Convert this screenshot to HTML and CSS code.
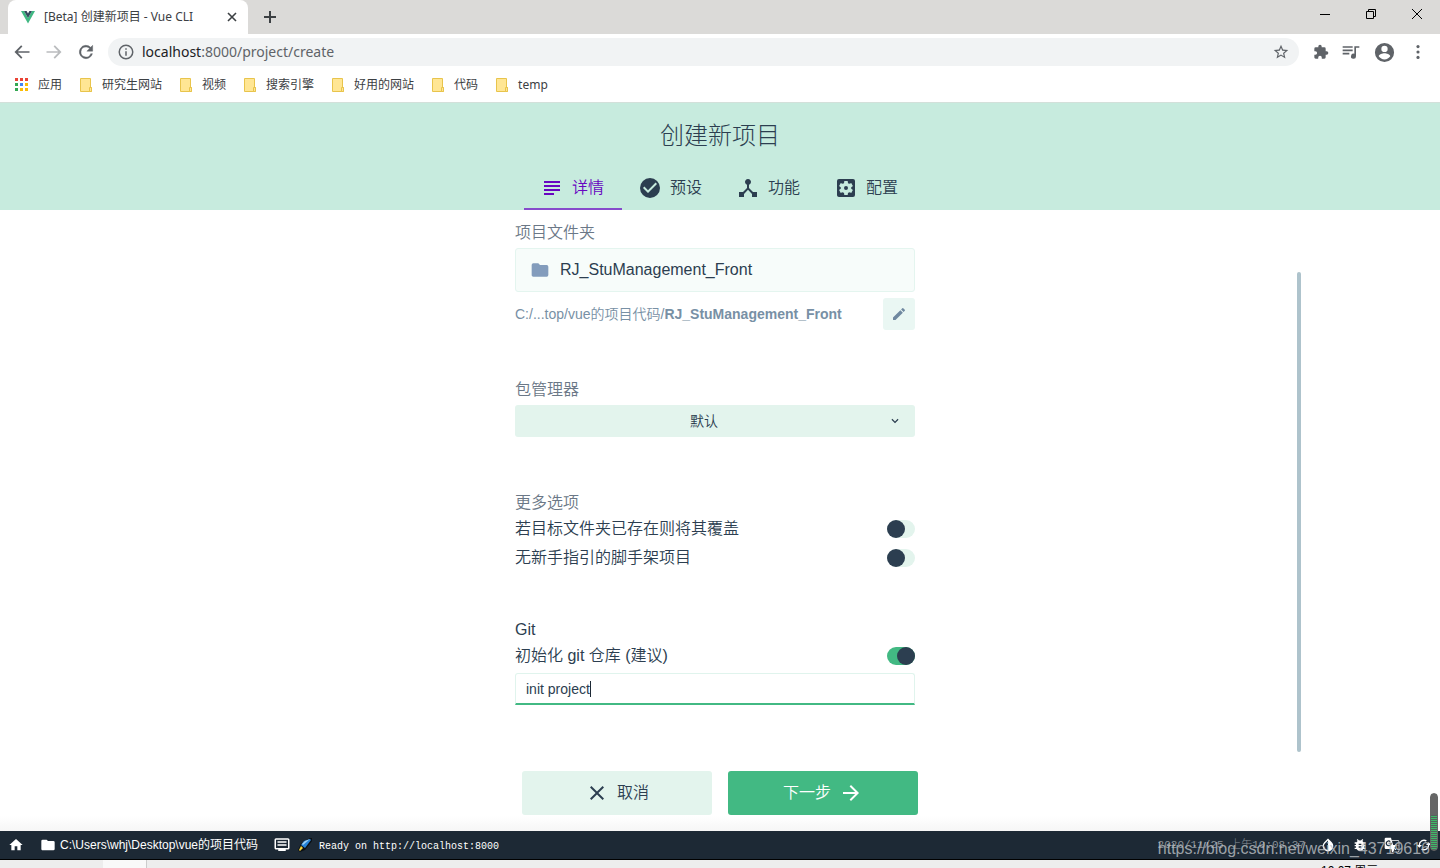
FILE: index.html
```html
<!DOCTYPE html>
<html lang="zh-CN">
<head>
<meta charset="utf-8">
<title>[Beta] 创建新项目 - Vue CLI</title>
<link rel="stylesheet" href="styles.css">
</head>
<body>
<div class="browser">
  <div class="tabstrip">
    <div class="browser-tab">
      <svg class="i16" viewBox="0 0 16 16"><path fill="#41b883" d="M1 2h3l4 7 4-7h3L8 14.500z"/><path fill="#35495e" d="M4 2h2.600L8 4.500 9.400 2H12L8 9z"/></svg>
      <span class="tab-title">[Beta] 创建新项目 - Vue CLI</span>
      <button class="plain" aria-label="关闭标签页"><svg class="i16" viewBox="0 0 16 16"><path stroke="#3c4043" stroke-width="1.600" d="M4 4l8 8M12 4l-8 8"/></svg></button>
    </div>
    <button class="plain new-tab" aria-label="新标签页"><svg class="i16" viewBox="0 0 16 16"><path stroke="#3c4043" stroke-width="2" d="M2 8h12M8 2v12"/></svg></button>
    <div class="window-buttons">
      <button class="plain" aria-label="最小化"><svg class="i16" viewBox="0 0 16 16"><path stroke="#000" d="M3 8.500h10"/></svg></button>
      <button class="plain" aria-label="还原"><svg class="i16" viewBox="0 0 16 16"><path fill="none" stroke="#000" d="M3.500 5.500h7v7h-7zM5.500 5.500v-2h7v7h-2"/></svg></button>
      <button class="plain" aria-label="关闭"><svg class="i16" viewBox="0 0 16 16"><path stroke="#000" d="M3 3l10 10M13 3L3 13"/></svg></button>
    </div>
  </div>
  <div class="toolbar">
    <button class="plain" aria-label="后退"><svg class="i20" viewBox="0 0 24 24"><path fill="#5f6368" d="M21 11H7l5.500-5.500L11 4l-8 8 8 8 1.500-1.500L7 13h14z"/></svg></button>
    <button class="plain" aria-label="前进"><svg class="i20" viewBox="0 0 24 24"><path fill="#babcbe" d="M13 4l-1.500 1.500L17 11H3v2h14l-5.500 5.500L13 20l8-8z"/></svg></button>
    <button class="plain" aria-label="刷新"><svg class="i20" viewBox="0 0 24 24"><path fill="#5f6368" stroke="#5f6368" stroke-width=".5" d="M17.650 6.350A8 8 0 1 0 19.730 14h-2.080A6 6 0 1 1 12 6c1.660 0 3.140.69 4.220 1.780L13 11h7V4z"/></svg></button>
    <div class="address">
      <svg class="i18" viewBox="0 0 24 24"><path fill="#5f6368" d="M11 7h2v2h-2zm0 4h2v6h-2zm1-9a10 10 0 1 0 0 20 10 10 0 0 0 0-20zm0 18a8 8 0 1 1 0-16 8 8 0 0 1 0 16z"/></svg>
      <span class="url"><span class="host">localhost</span>:8000/project/create</span>
      <button class="plain" aria-label="收藏"><svg class="i16" viewBox="1 1 22 22"><path fill="#5f6368" d="M22 9.240l-7.190-.62L12 2 9.190 8.630 2 9.240l5.460 4.730L5.820 21 12 17.270 18.180 21l-1.630-7.030zM12 15.400l-3.760 2.270 1-4.280-3.320-2.880 4.380-.38L12 6.100l1.710 4.040 4.380.38-3.320 2.880 1 4.280z"/></svg></button>
    </div>
    <div class="extensions">
      <button class="plain" aria-label="扩展程序"><svg class="i16" viewBox="0 0 24 24"><path fill="#5f6368" d="M20.500 11H19V7a2 2 0 0 0-2-2h-4V3.500a2.500 2.500 0 0 0-5 0V5H4a2 2 0 0 0-2 2v3.800h1.500a2.700 2.700 0 0 1 0 5.400H2V20c0 1.100.900 2 2 2h3.800v-1.500a2.700 2.700 0 0 1 5.400 0V22H17a2 2 0 0 0 2-2v-4h1.500a2.500 2.500 0 0 0 0-5z"/></svg></button>
      <button class="plain" aria-label="媒体控件"><svg class="i20" viewBox="0 0 24 24"><path fill="#5f6368" d="M2 5h12v2H2zm0 4h12v2H2zm0 4h8v2H2zM16 5h6v2h-4v10a3 3 0 1 1-2-2.800z"/></svg></button>
      <button class="plain" aria-label="账户"><svg class="i22" viewBox="0 0 24 24"><path fill="#5f6368" d="M12 2a10 10 0 1 0 0 20 10 10 0 0 0 0-20zm0 3a3.300 3.300 0 1 1 0 6.600A3.300 3.300 0 0 1 12 5zm0 14.200a7.200 7.200 0 0 1-6-3.220c.030-1.990 4-3.080 6-3.080s5.970 1.090 6 3.080a7.200 7.200 0 0 1-6 3.220z"/></svg></button>
      <button class="plain" aria-label="菜单"><svg class="i20" viewBox="0 0 24 24"><g fill="#5f6368"><circle cx="12" cy="5.500" r="1.900"/><circle cx="12" cy="12" r="1.900"/><circle cx="12" cy="18.500" r="1.900"/></g></svg></button>
    </div>
  </div>
  <nav class="bookmarks">
    <a href="#"><svg class="i14" viewBox="1 0 14 14"><path fill="#ea4335" d="M1 0h3v3H1zM6 0h3v3H6zM11 0h3v3h-3z"/><path fill="#34a853" d="M1 5h3v3H1zM1 10h3v3H1z"/><path fill="#4285f4" d="M6 5h3v3H6z"/><path fill="#fbbc05" d="M11 5h3v3h-3zM6 10h3v3H6zM11 10h3v3h-3z"/></svg>应用</a>
    <a href="#"><svg class="i14" viewBox="0 0 14 14"><use href="#bookmark"/></svg>研究生网站</a>
    <a href="#"><svg class="i14" viewBox="0 0 14 14"><use href="#bookmark"/></svg>视频</a>
    <a href="#"><svg class="i14" viewBox="0 0 14 14"><use href="#bookmark"/></svg>搜索引擎</a>
    <a href="#"><svg class="i14" viewBox="0 0 14 14"><use href="#bookmark"/></svg>好用的网站</a>
    <a href="#"><svg class="i14" viewBox="0 0 14 14"><use href="#bookmark"/></svg>代码</a>
    <a href="#"><svg class="i14" viewBox="0 0 14 14"><use href="#bookmark"/></svg>temp</a>
  </nav>
</div>

<header class="app-header">
  <h1>创建新项目</h1>
  <nav class="tabs">
    <a class="tab active" href="#"><svg class="i24" viewBox="0 0 24 24"><path d="M4 5h16v2H4zm0 4h16v2H4zm0 4h16v2H4zm0 4h10v2H4z"/></svg>详情</a>
    <a class="tab" href="#"><svg class="i24" viewBox="0 0 24 24"><path d="M12 2a10 10 0 1 0 0 20 10 10 0 0 0 0-20zm-2 15l-5-5 1.400-1.400 3.600 3.600 7.600-7.600L19 8z"/></svg>预设</a>
    <a class="tab" href="#"><svg class="i24" viewBox="0 0 24 24"><path d="M17 16l-4-4V8.820A3 3 0 1 0 11 8.820V12l-4 4H3v5h5v-3.050l4-4.200 4 4.200V21h5v-5z"/></svg>功能</a>
    <a class="tab" href="#"><svg class="i24" viewBox="0 0 24 24"><path d="M12 10a2 2 0 1 0 0 4 2 2 0 0 0 0-4zm7-7H5a2 2 0 0 0-2 2v14c0 1.100.900 2 2 2h14a2 2 0 0 0 2-2V5a2 2 0 0 0-2-2zm-1.750 9c0 .23-.020.460-.050.680l1.480 1.160c.13.110.17.300.080.450l-1.400 2.420c-.090.150-.270.210-.430.150l-1.740-.700c-.360.280-.760.510-1.180.690l-.260 1.850c-.030.170-.180.300-.350.300h-2.800c-.170 0-.320-.130-.350-.290l-.260-1.850c-.430-.180-.820-.410-1.180-.690l-1.740.700c-.160.060-.340 0-.430-.150l-1.400-2.420c-.090-.150-.050-.340.080-.450l1.480-1.160a5.600 5.600 0 0 1 0-1.370l-1.480-1.160c-.130-.110-.170-.300-.080-.450l1.400-2.420c.090-.150.270-.210.430-.150l1.740.700c.360-.280.760-.510 1.180-.690l.260-1.850c.030-.170.180-.300.350-.300h2.800c.170 0 .320.130.350.290l.260 1.850c.430.180.820.410 1.180.690l1.740-.700c.160-.060.340 0 .430.150l1.400 2.420c.090.150.050.340-.080.450l-1.480 1.160c.030.220.050.450.050.690z"/></svg>配置</a>
  </nav>
</header>

<main class="wizard">
  <form class="form" id="create-form">
    <section class="group folder">
      <label class="group-title" for="project-name">项目文件夹</label>
      <div class="name-box">
        <svg class="i20" viewBox="0 0 24 24"><use href="#folder"/></svg>
        <input id="project-name" type="text" value="RJ_StuManagement_Front">
      </div>
      <div class="path-row">
        <span>C:/...top/vue的项目代码/<b>RJ_StuManagement_Front</b></span>
        <button class="edit" type="button" aria-label="编辑"><svg class="i16" viewBox="0 0 24 24"><path d="M3 17.250V21h3.750L17.810 9.940l-3.750-3.750zM20.710 7.040a1 1 0 0 0 0-1.410l-2.340-2.340a1 1 0 0 0-1.410 0l-1.830 1.830 3.750 3.750z"/></svg></button>
      </div>
    </section>
    <section class="group manager">
      <label class="group-title" for="manager">包管理器</label>
      <div class="select-box">
        <select id="manager"><option>默认</option></select>
        <svg class="chevron" viewBox="0 0 24 24"><path d="M7.400 8.300L12 12.900l4.600-4.600L18 9.700l-6 6-6-6z"/></svg>
      </div>
    </section>
    <section class="group more">
      <div class="group-title">更多选项</div>
      <label class="option">若目标文件夹已存在则将其覆盖<input class="switch" type="checkbox"></label>
      <label class="option">无新手指引的脚手架项目<input class="switch" type="checkbox"></label>
    </section>
    <section class="group git">
      <div class="group-title dark">Git</div>
      <label class="option">初始化 git 仓库 (建议)<input class="switch" type="checkbox" checked></label>
      <input class="commit" type="text" value="init project" aria-label="提交信息">
      <span class="caret"></span>
    </section>
  </form>
  <div class="scroll-thumb"></div>
</main>

<div class="actions">
  <button class="action cancel" type="button"><svg class="i24" viewBox="0 0 24 24"><path d="M19 6.400L17.600 5 12 10.600 6.400 5 5 6.400l5.600 5.600L5 17.600 6.400 19l5.600-5.600 5.600 5.600 1.400-1.400-5.600-5.600z"/></svg>取消</button>
  <button class="action next" type="submit" form="create-form">下一步<svg class="i24" viewBox="0 0 24 24"><path d="M12 4l-1.400 1.400 5.600 5.600H4v2h12.200l-5.600 5.600L12 20l8-8z"/></svg></button>
</div>

<footer class="status">
  <a class="home" href="#" aria-label="主页"><svg class="i16" viewBox="0 0 24 24"><path d="M10 20v-6h4v6h5v-8h3L12 3 2 12h3v8z"/></svg></a>
  <a class="cwd" href="#"><svg class="i16" viewBox="0 0 24 24"><use href="#folder"/></svg>C:\Users\whj\Desktop\vue的项目代码</a>
  <a class="log" href="#"><svg class="i18" viewBox="0 0 24 24"><path d="M20 3H4a2 2 0 0 0-2 2v11c0 1.100.900 2 2 2h3v2h10v-2h3a2 2 0 0 0 2-2V5a2 2 0 0 0-2-2zm0 13H4V5h16zM6 7h12v2H6zm0 4h12v2H6z"/></svg>
    <svg class="i14" viewBox="0 0 14 14"><path fill="#0b0f14" d="M12 0h2v3l-7 9-5 2-2-2 3-6z"/><path fill="#2583d8" d="M12 1l1 1-6 8-4-3 3-4z"/><path fill="#9fd0f2" d="M12 1L5 7 4 6l3-3z"/><path fill="#f2d13b" d="M3 8l2 2-3 3-1-1z"/></svg>
    <span>Ready on http://localhost:8000</span></a>
  <span class="clock">2020/11/25 上午10:08:37</span>
  <div class="status-tools">
    <button class="plain" aria-label="主题"><svg class="i16" viewBox="0 0 24 24"><path d="M17.660 7.930L12 2.270 6.340 7.930A8 8 0 1 0 17.660 7.930zM12 19.600a6 6 0 0 1-4.240-10.240L12 5.100z"/></svg></button>
    <button class="plain" aria-label="报告问题"><svg class="i16" viewBox="0 0 24 24"><path d="M20 8h-2.800a6 6 0 0 0-1.800-2L17 4.400 15.600 3l-2.200 2.200a6 6 0 0 0-2.800 0L8.400 3 7 4.400 8.600 6a6 6 0 0 0-1.800 2H4v2h2.100L6 12H4v2h2l.1 2H4v2h2.800a6 6 0 0 0 10.400 0H20v-2h-2.100l.1-2h2v-2h-2l-.1-2H20zm-6 8h-4v-2h4zm0-4h-4v-2h4z"/></svg></button>
    <button class="plain" aria-label="翻译"><svg class="i16" viewBox="0 0 24 24"><path fill-rule="evenodd" d="M21 5H11.500L10.500 1H3a2 2 0 0 0-2 2v13c0 1.100.900 2 2 2h8l1 5h9a2 2 0 0 0 2-2V7a2 2 0 0 0-2-2zM7 14a4.500 4.500 0 1 1 3-7.800L8.700 7.500A2.600 2.600 0 1 0 9.400 10.500H7v-2h4.400A4.400 4.400 0 0 1 7 14zm15 7a1 1 0 0 1-1 1h-7.500l2-2.500-.7-2.500 2.700 2.700 1-1-2.700-2.700c1-1.100 1.700-2.300 2.100-3.500H22zm0-9h-4v-1h-1.300v1h-3L12 6h9a1 1 0 0 1 1 1z"/></svg></button>
    <button class="plain" aria-label="刷新数据"><svg class="i16" viewBox="0 0 24 24"><path d="M19 8l-4 4h3a6 6 0 0 1-8.800 5.300l-1.460 1.460A8 8 0 0 0 20 12h3zM6 12a6 6 0 0 1 8.800-5.300l1.460-1.460A8 8 0 0 0 4 12H1l4 4 4-4z"/></svg></button>
  </div>
</footer>
<div class="taskbar"><div class="task-active"></div><span class="task-clock">10:07 周三</span></div>
<div class="watermark">https://blog.csdn.net/weixin_43719616</div>
<div class="meter"></div>

<svg class="symbols" aria-hidden="true">
  <symbol id="bookmark" viewBox="0 0 14 14"><path fill="#ffe694" stroke="#e8c44c" d="M1.500.5h10v9h1v4h-11z"/><path fill="#ffe694" stroke="#e8c44c" d="M10.500 9.500h2v4h-2z"/></symbol>
  <symbol id="folder" viewBox="0 0 24 24"><path d="M10 4H4a2 2 0 0 0-2 2v12c0 1.100.900 2 2 2h16a2 2 0 0 0 2-2V8a2 2 0 0 0-2-2h-8z"/></symbol>
</svg>
</body>
</html>
```
FILE: styles.css
```css
* { box-sizing: border-box; }
body {
  margin: 0;
  min-height: 100vh;
  display: flex;
  flex-direction: column;
  position: relative;
  overflow-x: hidden;
  background: #fff;
  color: #2c3e50;
  font: 350 16px/24px "Liberation Sans", "Noto Sans CJK SC", sans-serif;
}
a { color: inherit; text-decoration: none; }
b { font-weight: 700; }
button, input, select { font: inherit; color: inherit; }
svg { display: block; flex: none; fill: currentColor; }
.symbols { display: none; }
.i14 { width: 14px; height: 14px; }
.i16 { width: 16px; height: 16px; }
.i18 { width: 18px; height: 18px; }
.i20 { width: 20px; height: 20px; }
.i22 { width: 23px; height: 23px; }
.i24 { width: 24px; height: 24px; }
.plain { border: 0; padding: 0; background: none; }

/* browser chrome */
.browser {
  font-family: "Noto Sans", "Noto Sans CJK SC", sans-serif;
  font-weight: 400;
  color: #3c4043;
  border-bottom: 1px solid #d3e0da;
}
.tabstrip { display: flex; height: 34px; background: #dbdad8; padding-left: 8px; }
.browser-tab {
  display: flex;
  align-items: center;
  width: 240px;
  padding: 0 8px 0 12px;
  gap: 8px;
  background: #fff;
  border-radius: 8px 8px 0 0;
  font-size: 12px;
}
.tab-title { flex: 1; white-space: nowrap; }
.new-tab { margin-left: 14px; }
.window-buttons { display: flex; gap: 30px; margin-left: auto; padding: 0 15px 6px 0; align-items: center; }
.toolbar { display: flex; align-items: center; height: 36px; padding: 0 12px; gap: 12px; }
.address {
  flex: 1;
  display: flex;
  align-items: center;
  height: 28px;
  gap: 7px;
  padding: 0 10px 0 9px;
  border-radius: 14px;
  background: #f1f3f4;
  font-size: 14px;
}
.url { flex: 1; color: #5f6368; }
.host { color: #202124; }
.extensions { display: flex; align-items: center; gap: 12px; padding-left: 2px; }
.bookmarks { display: flex; height: 32px; align-items: center; gap: 17px; padding: 0 0 2px 15px; font-size: 12px; line-height: 20px; }
.bookmarks a { display: flex; align-items: center; gap: 9px; }

/* application header */
.app-header { background: #c7ebde; }
h1 { margin: 0; padding: 16px 0 14px; text-align: center; font-size: 24px; line-height: 33px; font-weight: 300; }
.tabs { display: flex; justify-content: center; }
.tab {
  display: flex;
  align-items: center;
  gap: 8px;
  height: 44px;
  padding: 2px 18px 0 16px;
  border-bottom: 2px solid transparent;
}
.tab.active { color: #6806c1; border-color: #864bcb; }

/* form */
.wizard {
  flex: 1;
  width: 100%;
  max-width: 1162px;
  margin: 0 auto;
  padding: 11px 0 3px;
  display: flex;
  gap: 6px;
}
.form { width: 400px; margin: 0 auto; }
.scroll-thumb { width: 4px; margin-top: 51px; border-radius: 2px; background: #aec3cc; }
.group-title { display: block; color: #6b7887; }
.dark { color: #2c3e50; }
.name-box {
  display: flex;
  align-items: center;
  gap: 10px;
  height: 44px;
  margin: 3px 0 6px;
  padding: 0 14px;
  border: 1px solid #e4f5ef;
  border-radius: 3px;
  background: #f7fcfa;
}
.name-box svg { color: #839cbc; }
.name-box input { flex: 1; min-width: 0; border: 0; padding: 0; background: none; outline: 0; }
.path-row { display: flex; justify-content: space-between; align-items: center; font-size: 14px; color: #7890a5; }
.edit {
  display: grid;
  place-items: center;
  width: 32px;
  height: 32px;
  border: 0;
  border-radius: 3px;
  padding: 0;
  background: #eaf7f3;
  color: #7089a0;
}
.manager { margin-top: 48px; }
.select-box { position: relative; margin-top: 3px; font-size: 14px; }
.select-box select {
  display: block;
  width: 100%;
  height: 32px;
  border: 0;
  border-radius: 3px;
  padding: 0 22px 0 0;
  appearance: none;
  text-align: center;
  text-align-last: center;
  background: #e3f4ed;
}
.chevron { position: absolute; right: 13px; top: 9px; width: 14px; height: 14px; pointer-events: none; }
.more { margin-top: 54px; }
.git { margin-top: 46px; position: relative; }
.option { display: flex; justify-content: space-between; align-items: center; height: 28px; margin-bottom: 1px; }
.switch { appearance: none; margin: 0; width: 28px; height: 18px; border-radius: 9px; background: #e3f4ed; }
.switch::before { content: ""; display: block; width: 18px; height: 18px; border-radius: 50%; background: #2c3e50; }
.switch:checked { background: #42b983; }
.switch:checked::before { margin-left: auto; }
.commit {
  display: block;
  width: 100%;
  height: 32px;
  margin-top: 3px;
  padding: 0 10px;
  border: 1px solid #e0f4ed;
  border-bottom: 2px solid #42b983;
  border-radius: 3px 3px 0 0;
  outline: 0;
  font-size: 14px;
}
.caret { position: absolute; left: 75px; bottom: 8px; width: 1px; height: 16px; background: #1d2935; }

.actions { display: flex; justify-content: center; gap: 16px; padding: 16px; background: linear-gradient(#fff 80%, #f6f6f6); }
.action {
  display: flex;
  align-items: center;
  justify-content: center;
  gap: 8px;
  width: 190px;
  height: 44px;
  border: 0;
  border-radius: 3px;
  background: #e3f4ed;
}
.next { background: #42b983; color: #fff; }

/* status bar */
.status {
  display: flex;
  align-items: center;
  height: 29px;
  padding: 0 8px;
  border-bottom: 1px solid #000;
  background: #1d2935;
  color: #fff;
  font-size: 12px;
  font-weight: 400;
}
.cwd { display: flex; align-items: center; gap: 4px; margin-left: 16px; }
.log { display: flex; align-items: center; gap: 7px; margin-left: 15px; font-family: "Liberation Mono", monospace; font-size: 10px; }
.log span { white-space: nowrap; padding-top: 3px; }
.clock { margin-left: auto; color: #8b9299; font: 300 11px/20px "Liberation Mono", "Noto Sans CJK SC", monospace; }
.status-tools { display: flex; gap: 16px; margin-left: 15px; }
.taskbar { display: flex; justify-content: space-between; height: 8px; overflow: hidden; background: #ededed; }
.task-active { width: 44px; margin-left: 103px; background: #f9f9f9; border-right: 1px solid #ccc; }
.task-clock { width: 119px; padding-top: 3px; color: #000; font-size: 12px; line-height: 16px; }
.watermark { position: absolute; right: 10px; bottom: 7px; color: rgba(190, 194, 198, 0.8); font-size: 16px; }
.meter {
  position: absolute;
  right: 2px;
  bottom: 17px;
  width: 8px;
  height: 58px;
  border: 1px solid #666;
  border-radius: 4px;
  background: linear-gradient(#666 21px, transparent 21px), repeating-linear-gradient(#3fba68 0 1px, #53625c 1px 2px);
}
```
